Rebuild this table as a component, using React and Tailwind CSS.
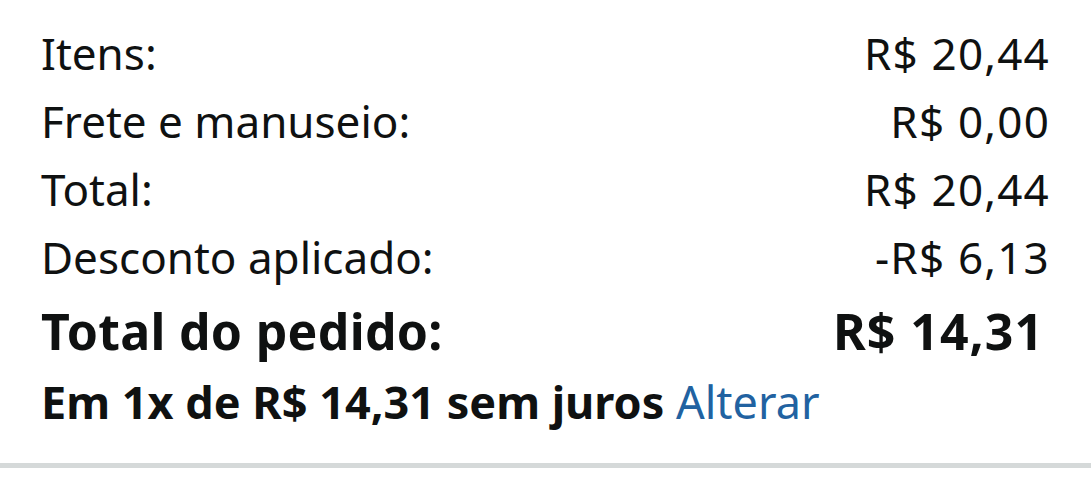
export default function App() {
  const rows = [
    ["Itens:", "R$ 20,44"],
    ["Frete e manuseio:", "R$ 0,00"],
    ["Total:", "R$ 20,44"],
    ["Desconto aplicado:", "-R$ 6,13"],
  ];
  return (
    <div className="w-[1091px] h-[500px] bg-white text-[#0f1111] overflow-hidden" style={{ fontFamily: '"Noto Sans", "Open Sans", sans-serif' }}>
      <div className="pt-[19px] pl-[41px] pr-[42px]">
        {rows.map(([l, v]) => (
          <div key={l} className="flex justify-between h-[68px] leading-[68px] text-[44px]">
            <span>{l}</span>
            <span className="tracking-[1.2px] -mr-[1px]">{v}</span>
          </div>
        ))}
        <div className="flex justify-between h-[81px] leading-[81px] text-[50px] font-bold">
          <span className="tracking-[0.3px]">Total do pedido:</span>
          <span className="tracking-[1px] mr-[5px]">R$ 14,31</span>
        </div>
        <div className="h-[60px] leading-[60px] text-[45px]">
          <span className="font-bold">Em 1x de R$ 14,31 sem juros</span>{" "}
          <span className="text-[#2162a1]">Alterar</span>
        </div>
      </div>
      <div className="mt-[31px] h-[5px] bg-[#d5d9d9]" />
    </div>
  );
}
